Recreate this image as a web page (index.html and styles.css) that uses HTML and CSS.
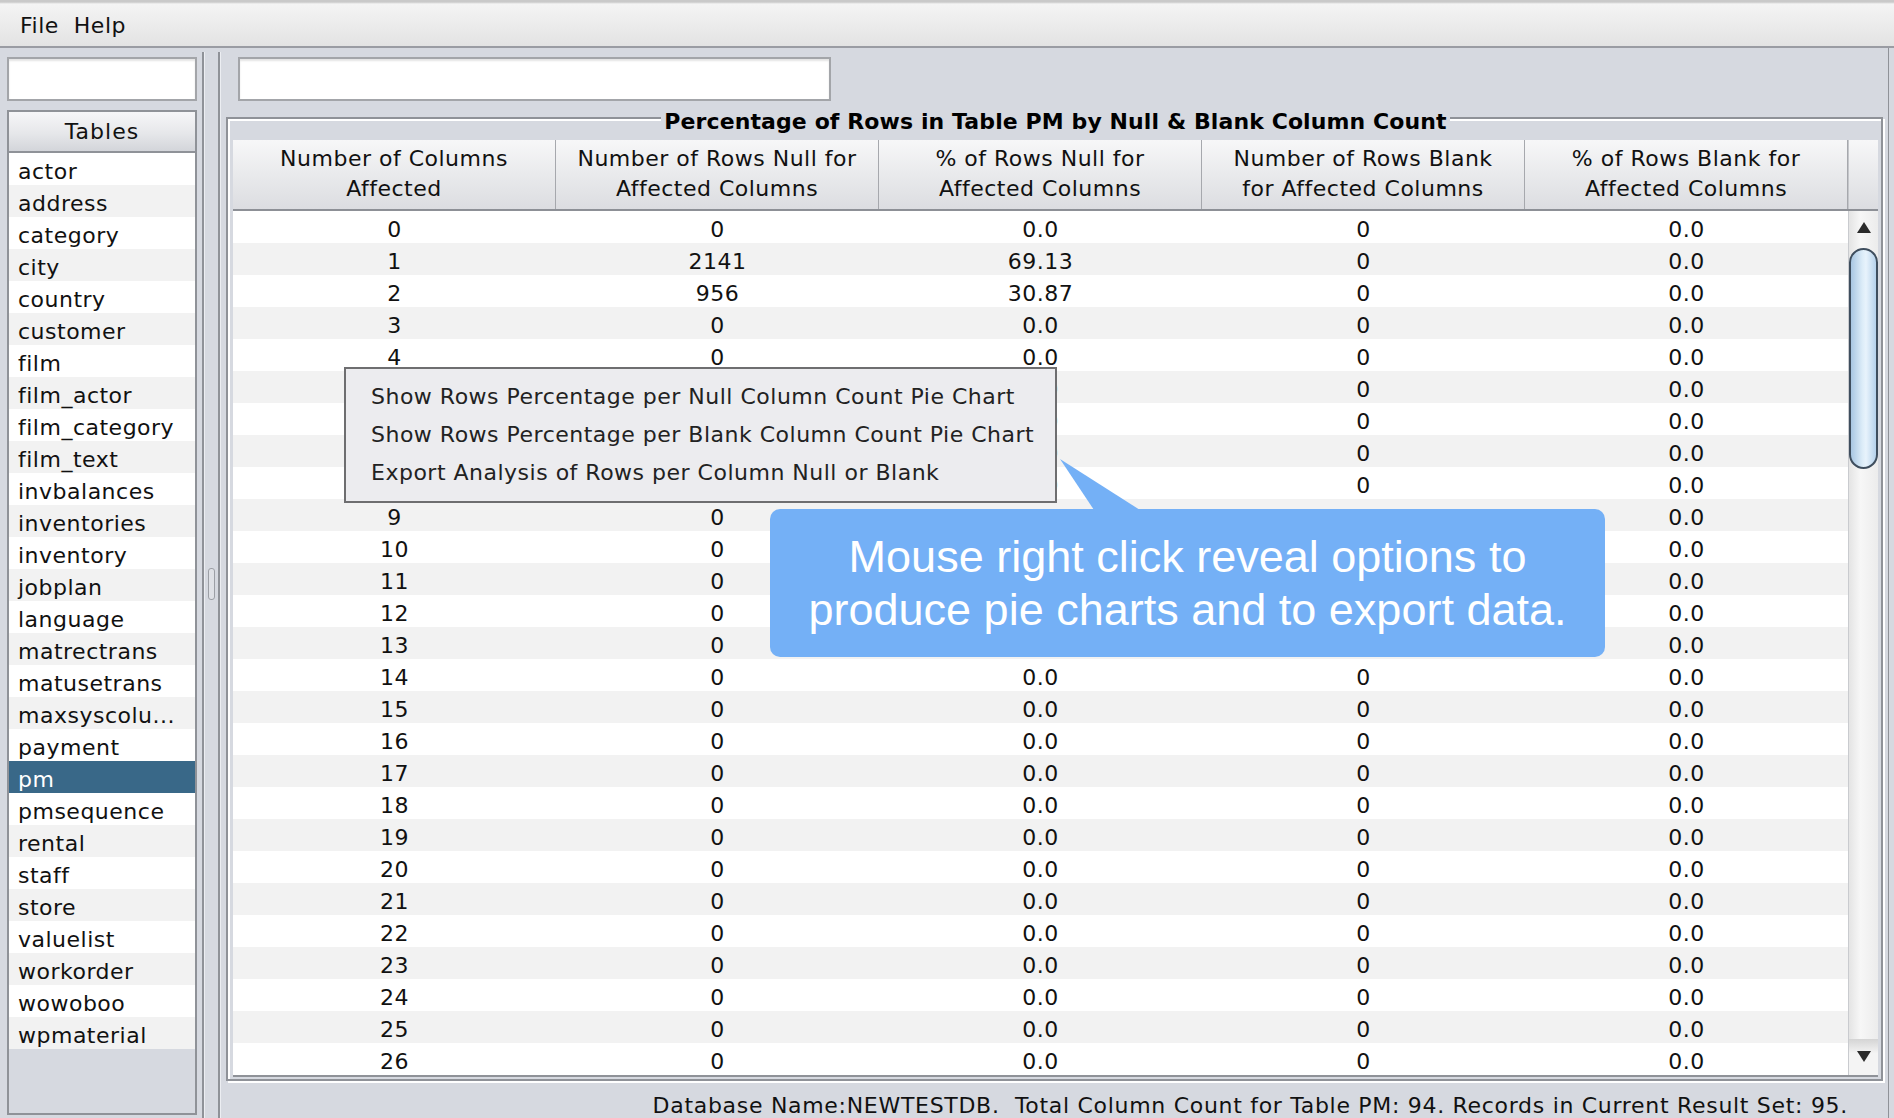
FILE: index.html
```html
<!DOCTYPE html>
<html>
<head>
<meta charset="utf-8">
<link rel="stylesheet" href="styles.css">
</head>
<body>
<div class="menubar"><span class="menu">File</span><span class="menu">Help</span></div>
<div class="main">
  <aside class="left">
    <div class="field"></div>
    <div class="listbox">
      <div class="listhead">Tables</div>
      <ul class="list">
        <li>actor</li><li>address</li><li>category</li><li>city</li><li>country</li><li>customer</li><li>film</li><li>film_actor</li><li>film_category</li><li>film_text</li><li>invbalances</li><li>inventories</li><li>inventory</li><li>jobplan</li><li>language</li><li>matrectrans</li><li>matusetrans</li><li>maxsyscolu...</li><li>payment</li><li class="sel">pm</li><li>pmsequence</li><li>rental</li><li>staff</li><li>store</li><li>valuelist</li><li>workorder</li><li>wowoboo</li><li>wpmaterial</li>
      </ul>
    </div>
  </aside>
  <div class="splitter"><div class="grip"></div></div>
  <section class="right">
    <div class="field wide"></div>
    <div class="titled">
      <div class="title">Percentage of Rows in Table PM by Null &amp; Blank Column Count</div>
      <div class="table">
        <div class="thead">
          <div class="th">Number of Columns<br>Affected</div>
          <div class="th">Number of Rows Null for<br>Affected Columns</div>
          <div class="th">% of Rows Null for<br>Affected Columns</div>
          <div class="th">Number of Rows Blank<br>for Affected Columns</div>
          <div class="th">% of Rows Blank for<br>Affected Columns</div>
          <div class="corner"></div>
        </div>
        <div class="tbody-wrap">
          <div class="tbody">
            <div class="tr"><span>0</span><span>0</span><span>0.0</span><span>0</span><span>0.0</span></div>
            <div class="tr"><span>1</span><span>2141</span><span>69.13</span><span>0</span><span>0.0</span></div>
            <div class="tr"><span>2</span><span>956</span><span>30.87</span><span>0</span><span>0.0</span></div>
            <div class="tr"><span>3</span><span>0</span><span>0.0</span><span>0</span><span>0.0</span></div>
            <div class="tr"><span>4</span><span>0</span><span>0.0</span><span>0</span><span>0.0</span></div>
            <div class="tr"><span>5</span><span>0</span><span>0.0</span><span>0</span><span>0.0</span></div>
            <div class="tr"><span>6</span><span>0</span><span>0.0</span><span>0</span><span>0.0</span></div>
            <div class="tr"><span>7</span><span>0</span><span>0.0</span><span>0</span><span>0.0</span></div>
            <div class="tr"><span>8</span><span>0</span><span>0.0</span><span>0</span><span>0.0</span></div>
            <div class="tr"><span>9</span><span>0</span><span>0.0</span><span>0</span><span>0.0</span></div>
            <div class="tr"><span>10</span><span>0</span><span>0.0</span><span>0</span><span>0.0</span></div>
            <div class="tr"><span>11</span><span>0</span><span>0.0</span><span>0</span><span>0.0</span></div>
            <div class="tr"><span>12</span><span>0</span><span>0.0</span><span>0</span><span>0.0</span></div>
            <div class="tr"><span>13</span><span>0</span><span>0.0</span><span>0</span><span>0.0</span></div>
            <div class="tr"><span>14</span><span>0</span><span>0.0</span><span>0</span><span>0.0</span></div>
            <div class="tr"><span>15</span><span>0</span><span>0.0</span><span>0</span><span>0.0</span></div>
            <div class="tr"><span>16</span><span>0</span><span>0.0</span><span>0</span><span>0.0</span></div>
            <div class="tr"><span>17</span><span>0</span><span>0.0</span><span>0</span><span>0.0</span></div>
            <div class="tr"><span>18</span><span>0</span><span>0.0</span><span>0</span><span>0.0</span></div>
            <div class="tr"><span>19</span><span>0</span><span>0.0</span><span>0</span><span>0.0</span></div>
            <div class="tr"><span>20</span><span>0</span><span>0.0</span><span>0</span><span>0.0</span></div>
            <div class="tr"><span>21</span><span>0</span><span>0.0</span><span>0</span><span>0.0</span></div>
            <div class="tr"><span>22</span><span>0</span><span>0.0</span><span>0</span><span>0.0</span></div>
            <div class="tr"><span>23</span><span>0</span><span>0.0</span><span>0</span><span>0.0</span></div>
            <div class="tr"><span>24</span><span>0</span><span>0.0</span><span>0</span><span>0.0</span></div>
            <div class="tr"><span>25</span><span>0</span><span>0.0</span><span>0</span><span>0.0</span></div>
            <div class="tr"><span>26</span><span>0</span><span>0.0</span><span>0</span><span>0.0</span></div>
          </div>
          <div class="vscroll">
            <div class="arrow up"></div>
            <div class="thumb"></div>
            <div class="track"></div>
            <div class="arrow down"></div>
          </div>
        </div>
      </div>
    </div>
    <div class="status">Database Name:NEWTESTDB.&nbsp; Total Column Count for Table PM: 94. Records in Current Result Set: 95.</div>
  </section>
</div>

<div class="popup">
  <div class="item">Show Rows Percentage per Null Column Count Pie Chart</div>
  <div class="item">Show Rows Percentage per Blank Column Count Pie Chart</div>
  <div class="item">Export Analysis of Rows per Column Null or Blank</div>
</div>

<svg class="pointer" width="90" height="54" viewBox="0 0 90 54"><polygon points="0,0 34,51 80,51" fill="#74b0f6"/></svg>
<div class="callout">Mouse right click reveal options to<br>produce pie charts and to export data.</div>
</body>
</html>
```
FILE: styles.css
```css
* { box-sizing: border-box; }
html, body { margin: 0; padding: 0; }
body {
  width: 1894px;
  height: 1118px;
  overflow: hidden;
  position: relative;
  background: #d6d9e0;
  font-family: "DejaVu Sans", "Liberation Sans", sans-serif;
  font-size: 22px;
  letter-spacing: 0.5px;
  color: #111;
}
.menubar {
  height: 48px;
  display: flex;
  align-items: center;
  gap: 15px;
  padding: 6px 0 0 20px;
  background: linear-gradient(#c9c9c9 0, #c9c9c9 2px, #f4f4f4 4px, #e3e3e3 100%);
  border-bottom: 2px solid #9a9ca3;
}
.menu { line-height: 24px; }
.main {
  display: flex;
  height: 1070px;
}
.left {
  width: 200px;
  padding: 9px 0 0 7px;
  display: flex;
  flex-direction: column;
}
.field {
  width: 190px;
  height: 44px;
  background: #fff;
  border: 2px solid #a3a5a9;
  box-shadow: inset 0 2px 2px #e4e4e4;
}
.listbox {
  margin-top: 9px;
  width: 190px;
  height: 1005px;
  border: 2px solid #8f9298;
  background: #d6d9e0;
}
.listhead {
  height: 41px;
  border-bottom: 2px solid #8f9298;
  background: linear-gradient(#f6f6f8, #e6e7ea 55%, #d3d5da);
  text-align: center;
  line-height: 40px;
  letter-spacing: 1px;
}
.list {
  list-style: none;
  margin: 0;
  padding: 0;
}
.list li {
  height: 32px;
  line-height: 28px;
  padding: 5px 0 0 9px;
  background: #fff;
  color: #111;
  white-space: nowrap;
}
.list li:nth-child(even) { background: #f2f2f2; }
.list li.sel { background: #396888; color: #fff; }
.splitter {
  width: 18px;
  margin: 4px 2px 0 2px;
  border-left: 2px solid #8f9298;
  border-right: 2px solid #8f9298;
  box-shadow: inset 1px 0 0 #eceef2, 1px 0 0 #eceef2;
  display: flex;
  align-items: flex-start;
  justify-content: center;
  padding-top: 516px;
}
.grip {
  width: 7px;
  height: 32px;
  border: 1px solid #9c9fa5;
  border-radius: 3px;
  background: #dfe1e6;
}
.right {
  flex: 1;
  padding: 9px 11px 0 4px;
  display: flex;
  flex-direction: column;
  box-shadow: inset -5px 0 0 #d6d9e0, inset -6px 0 0 #8f9298;
}
.field.wide {
  width: 593px;
  margin-left: 12px;
}
.titled {
  margin-top: 16px;
  height: 966px;
  border: 2px solid #8f9298;
  box-shadow: inset 2px 2px 0 #fff, 2px 2px 0 #fff;
  padding: 0 3px 0 5px;
}
.title {
  margin: -9px auto 0;
  width: fit-content;
  padding: 0 3px;
  background: #d6d9e0;
  font-weight: bold;
  line-height: 24px;
  letter-spacing: 0.1px;
  color: #000;
}
.table {
  margin-top: 6px;
  width: 1645px;
  border-bottom: 2px solid #8f9298;
}
.thead {
  display: flex;
  height: 71px;
  border-bottom: 2px solid #8d9096;
  background: linear-gradient(#f7f7f8, #e9eaec 50%, #dcdde1);
}
.th {
  width: 323px;
  display: flex;
  align-items: center;
  justify-content: center;
  text-align: center;
  line-height: 30px;
  border-right: 1px solid #a6a8ad;
  padding-top: 0;
}
.corner {
  width: 30px;
  border-left: 1px solid #c4c6ca;
}
.tbody-wrap { display: flex; }
.tbody { width: 1615px; }
.tr {
  display: flex;
  height: 32px;
  line-height: 28px;
  padding-top: 5px;
  background: #fff;
}
.tr:nth-child(even) { background: #f2f2f2; }
.tr span {
  width: 323px;
  text-align: center;
  color: #111;
}
.vscroll {
  width: 30px;
  height: 864px;
  display: flex;
  flex-direction: column;
  background: linear-gradient(90deg, #e4e4e4, #f7f7f7 40%, #ececec);
  border-left: 1px solid #c9cbcf;
}
.arrow {
  height: 34px;
  display: flex;
  align-items: center;
  justify-content: center;
}
.arrow.up::before {
  content: "";
  border-left: 7px solid transparent;
  border-right: 7px solid transparent;
  border-bottom: 11px solid #2b2b2b;
}
.arrow.down {
  height: 36px;
  background: linear-gradient(#d4d4d4, #f4f4f4 40%);
}
.arrow.down::before {
  content: "";
  border-left: 7px solid transparent;
  border-right: 7px solid transparent;
  border-top: 11px solid #2b2b2b;
}
.thumb {
  margin: 3px 0 0 0;
  height: 221px;
  border: 2px solid #3f4e5e;
  border-radius: 15px;
  background: linear-gradient(90deg, #a8c6e2, #dcecf8 45%, #e8f3fc 60%, #b5d1eb);
}
.track { flex: 1; }
.status {
  padding: 13px 35px 0 0;
  text-align: right;
  line-height: 24px;
  letter-spacing: 0.7px;
  color: #111;
  white-space: nowrap;
}
.popup {
  position: absolute;
  left: 344px;
  top: 367px;
  width: 713px;
  height: 136px;
  background: #ececef;
  border: 2px solid #6e6e70;
  padding: 9px 0 0 25px;
}
.popup .item {
  line-height: 38px;
  color: #222;
  white-space: nowrap;
}
.pointer {
  position: absolute;
  left: 1060px;
  top: 459px;
}
.callout {
  position: absolute;
  left: 770px;
  top: 509px;
  width: 835px;
  height: 148px;
  border-radius: 10px;
  background: #74b0f6;
  color: #fff;
  font-family: "Liberation Sans", Arial, sans-serif;
  font-size: 45px;
  letter-spacing: 0;
  line-height: 53px;
  text-align: center;
  padding-top: 21px;
}
```
